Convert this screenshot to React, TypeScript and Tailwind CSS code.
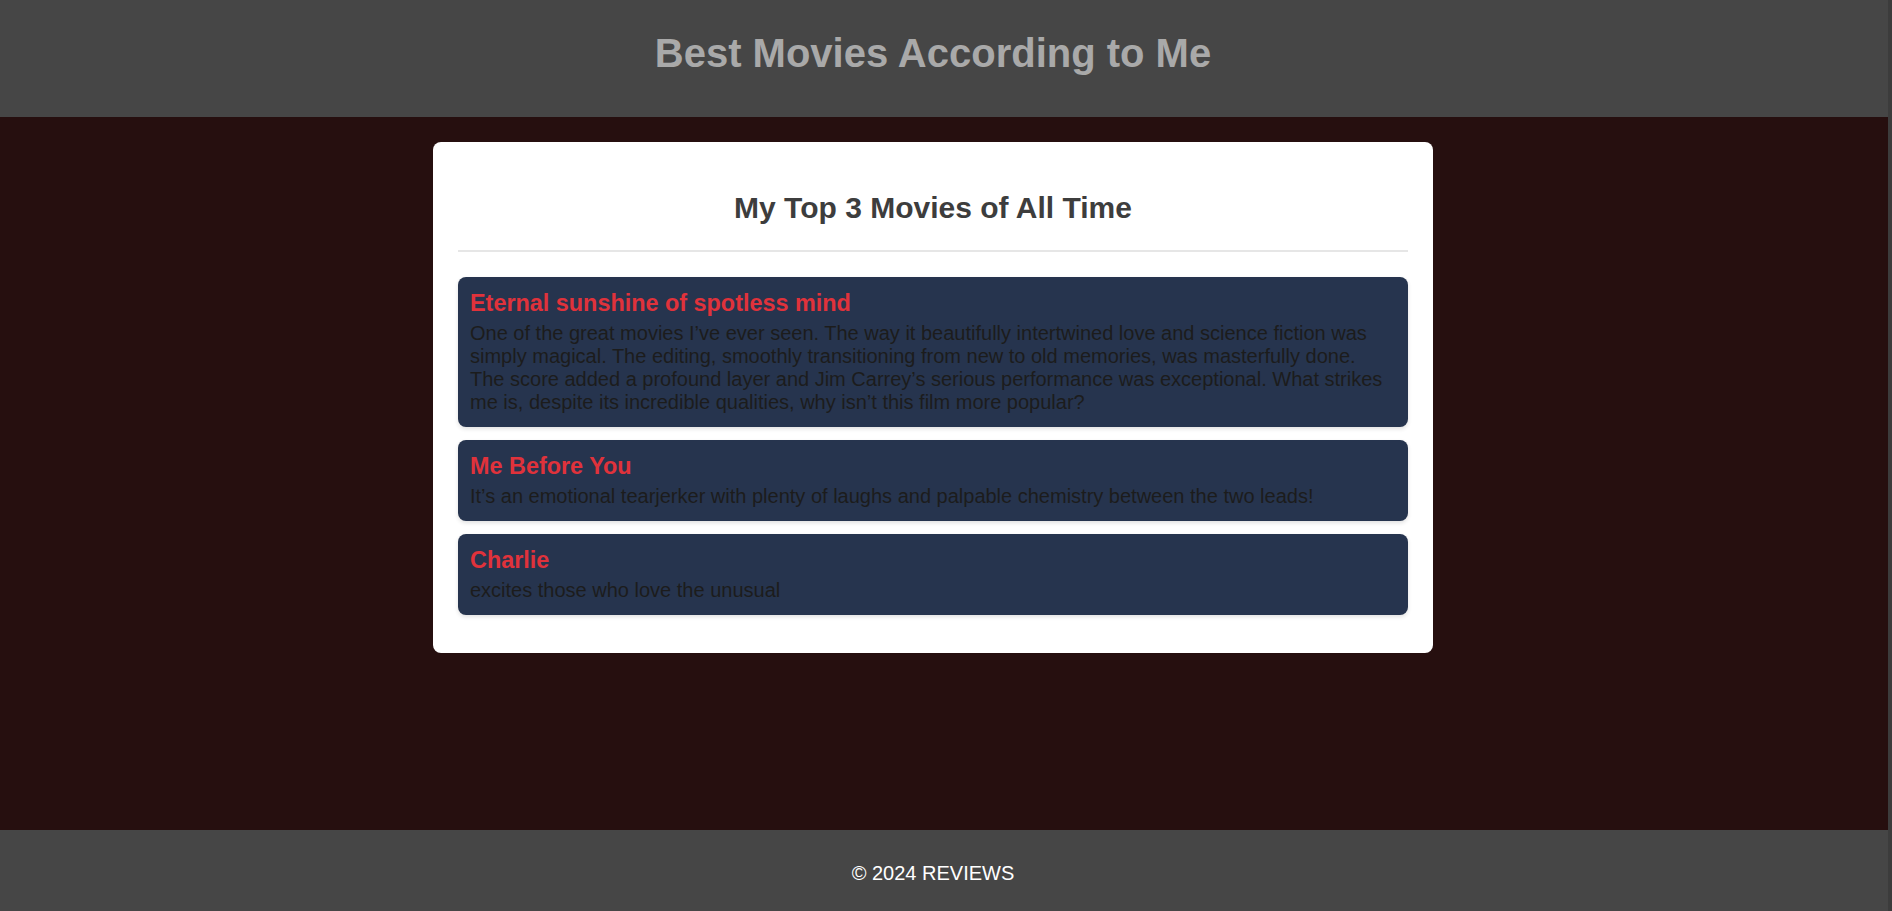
import React from 'react';

interface Movie {
  title: string;
  review: string;
}

const movies: Movie[] = [
  {
    title: 'Eternal sunshine of spotless mind',
    review:
      'One of the great movies I’ve ever seen. The way it beautifully intertwined love and science fiction was simply magical. The editing, smoothly transitioning from new to old memories, was masterfully done. The score added a profound layer and Jim Carrey’s serious performance was exceptional. What strikes me is, despite its incredible qualities, why isn’t this film more popular?',
  },
  {
    title: 'Me Before You',
    review:
      'It’s an emotional tearjerker with plenty of laughs and palpable chemistry between the two leads!',
  },
  {
    title: 'Charlie',
    review: 'excites those who love the unusual',
  },
];

const MovieCard: React.FC<{ movie: Movie }> = ({ movie }) => (
  <li className="mb-[13px] rounded-lg bg-[#26344e] pl-3 pr-5 pt-[13px] pb-[13px] shadow-[0_2px_4px_rgba(0,0,0,0.12)]">
    <h3 className="mb-[5px] text-[23.4px] font-bold leading-[normal] text-[#e0323b]">{movie.title}</h3>
    <p className="text-[20px] leading-[normal] text-[#1c1c1c]">{movie.review}</p>
  </li>
);

const App: React.FC = () => {
  return (
    <div className="flex min-h-screen bg-[#3c3c3c] font-['Liberation_Sans',Arial,sans-serif] text-[20px]">
      <div className="flex min-h-screen flex-1 flex-col">
        <header className="h-[117px] bg-[#464646] pt-[31px] pr-[22px] text-center">
          <h1 className="text-[40px] font-bold leading-[normal] text-[#a9a9a9]">Best Movies According to Me</h1>
        </header>

        <main className="flex-1 bg-[#260f0f] pt-[25px] pr-[22px]">
          <section className="mx-auto w-[1000px] rounded-lg bg-white px-[25px] pt-[24px] pb-[25px]">
            <h2 className="border-b-2 border-[#e6e6e6] pt-[25px] pb-[25px] text-center text-[30px] font-bold leading-[normal] text-[#3d3d3d]">
              My Top 3 Movies of All Time
            </h2>
            <ul className="mt-[25px]">
              {movies.map((movie) => (
                <MovieCard key={movie.title} movie={movie} />
              ))}
            </ul>
          </section>
        </main>

        <footer className="h-[81px] bg-[#464646] pt-[32px] pr-[22px] text-center">
          <p className="text-[20px] leading-[normal] text-white">© 2024 REVIEWS</p>
        </footer>
      </div>
      <div className="w-[4px] bg-[#3c3c3c]" />
    </div>
  );
};

export default App;
